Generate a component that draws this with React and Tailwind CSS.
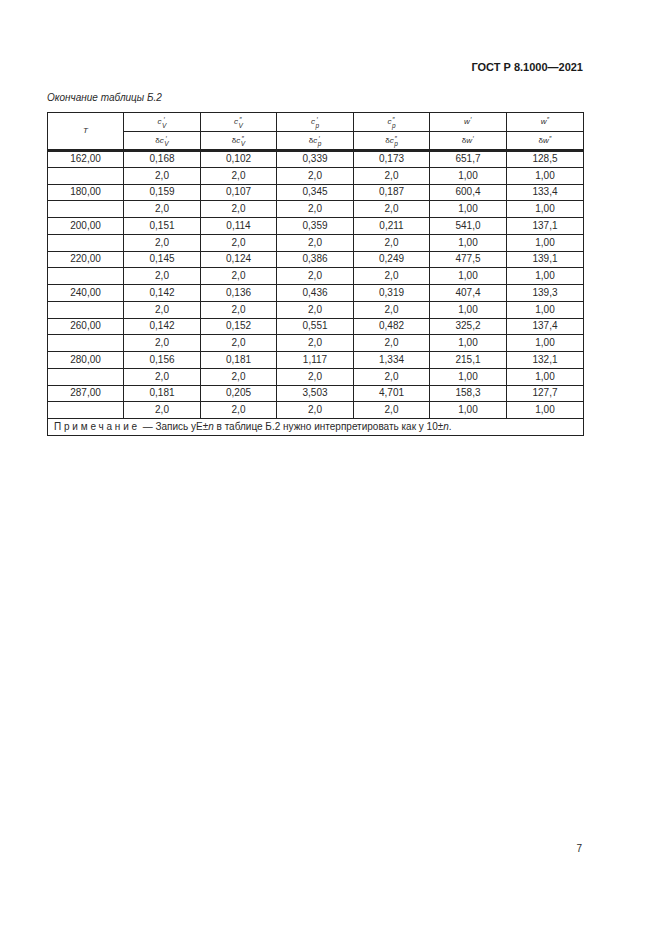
import React from 'react';

const rows = [
    ['162,00', '0,168', '0,102', '0,339', '0,173', '651,7', '128,5'],
    ['180,00', '0,159', '0,107', '0,345', '0,187', '600,4', '133,4'],
    ['200,00', '0,151', '0,114', '0,359', '0,211', '541,0', '137,1'],
    ['220,00', '0,145', '0,124', '0,386', '0,249', '477,5', '139,1'],
    ['240,00', '0,142', '0,136', '0,436', '0,319', '407,4', '139,3'],
    ['260,00', '0,142', '0,152', '0,551', '0,482', '325,2', '137,4'],
    ['280,00', '0,156', '0,181', '1,117', '1,334', '215,1', '132,1'],
    ['287,00', '0,181', '0,205', '3,503', '4,701', '158,3', '127,7'],
];

const errRow = ['', '2,0', '2,0', '2,0', '2,0', '1,00', '1,00'];

// symbol with stacked super/subscript, like c′_V
const Sym = ({ d, base, sup, sub }) => (
    <span className="inline-flex items-center italic">
        {d && <span className="not-italic">δ</span>}
        <span>{base}</span>
        <span className="inline-flex flex-col text-[6.5px] leading-[5.5px] ml-[0.5px] mt-[1px]">
            <span className="not-italic">{sup}</span>
            <span>{sub || '\u00a0'}</span>
        </span>
    </span>
);

const heads = [
    { base: 'c', sup: '′', sub: 'V' },
    { base: 'c', sup: '″', sub: 'V' },
    { base: 'c', sup: '′', sub: 'p' },
    { base: 'c', sup: '″', sub: 'p' },
    { base: 'w', sup: '′' },
    { base: 'w', sup: '″' },
];

const cell = 'border border-[#222] text-center align-middle p-0';

const App = () => {
    return (
        <div className="w-[661px] h-[935px] bg-white text-[#2a2a2a] overflow-hidden" style={{ fontFamily: '"Liberation Sans", Arial, sans-serif' }}>
            <div className="ml-[47px] w-[536px] pt-[61px]">
                <div className="text-right text-[11px] font-bold leading-[13px] text-[#1a1a1a]">ГОСТ Р 8.1000—2021</div>

                <div className="mt-[18px] text-[10px] italic leading-[12px]">Окончание таблицы Б.2</div>

                <table className="mt-[8px] w-[536px] border-collapse table-fixed text-[10px] leading-none">
                    <colgroup>
                        <col className="w-[76px]" />
                        <col className="w-[77px]" />
                        <col className="w-[76px]" />
                        <col className="w-[77px]" />
                        <col className="w-[76px]" />
                        <col className="w-[77px]" />
                        <col className="w-[77px]" />
                    </colgroup>
                    <thead>
                        <tr className="h-[19px]">
                            <td rowSpan={2} className={`${cell} border-b-[3px] border-b-double italic text-[8px]`}>T</td>
                            {heads.map((h, i) => (
                                <td key={i} className={`${cell} text-[8px]`}><Sym {...h} /></td>
                            ))}
                        </tr>
                        <tr className="h-[19px]">
                            {heads.map((h, i) => (
                                <td key={i} className={`${cell} border-b-[3px] border-b-double text-[8px]`}><Sym d {...h} /></td>
                            ))}
                        </tr>
                    </thead>
                    <tbody>
                        {rows.map((r, i) => (
                            <React.Fragment key={i}>
                                <tr className="h-[16.75px]">
                                    {r.map((v, j) => <td key={j} className={cell}>{v}</td>)}
                                </tr>
                                <tr className="h-[16.75px]">
                                    {errRow.map((v, j) => <td key={j} className={cell}>{v}</td>)}
                                </tr>
                            </React.Fragment>
                        ))}
                        <tr className="h-[17px]">
                            <td colSpan={7} className="border border-[#222] text-left px-[6px] text-[10px]">
                                <span className="tracking-[2.8px]">Примечание</span> — Запись y<span>E</span>±<i>n</i> в таблице Б.2 нужно интерпретировать как y 10±<i>n</i>.
                            </td>
                        </tr>
                    </tbody>
                </table>

                <div className="mt-[407px] text-right pr-[1px] text-[10px] leading-[12px]">7</div>
            </div>
        </div>
    );
};

export default App;
